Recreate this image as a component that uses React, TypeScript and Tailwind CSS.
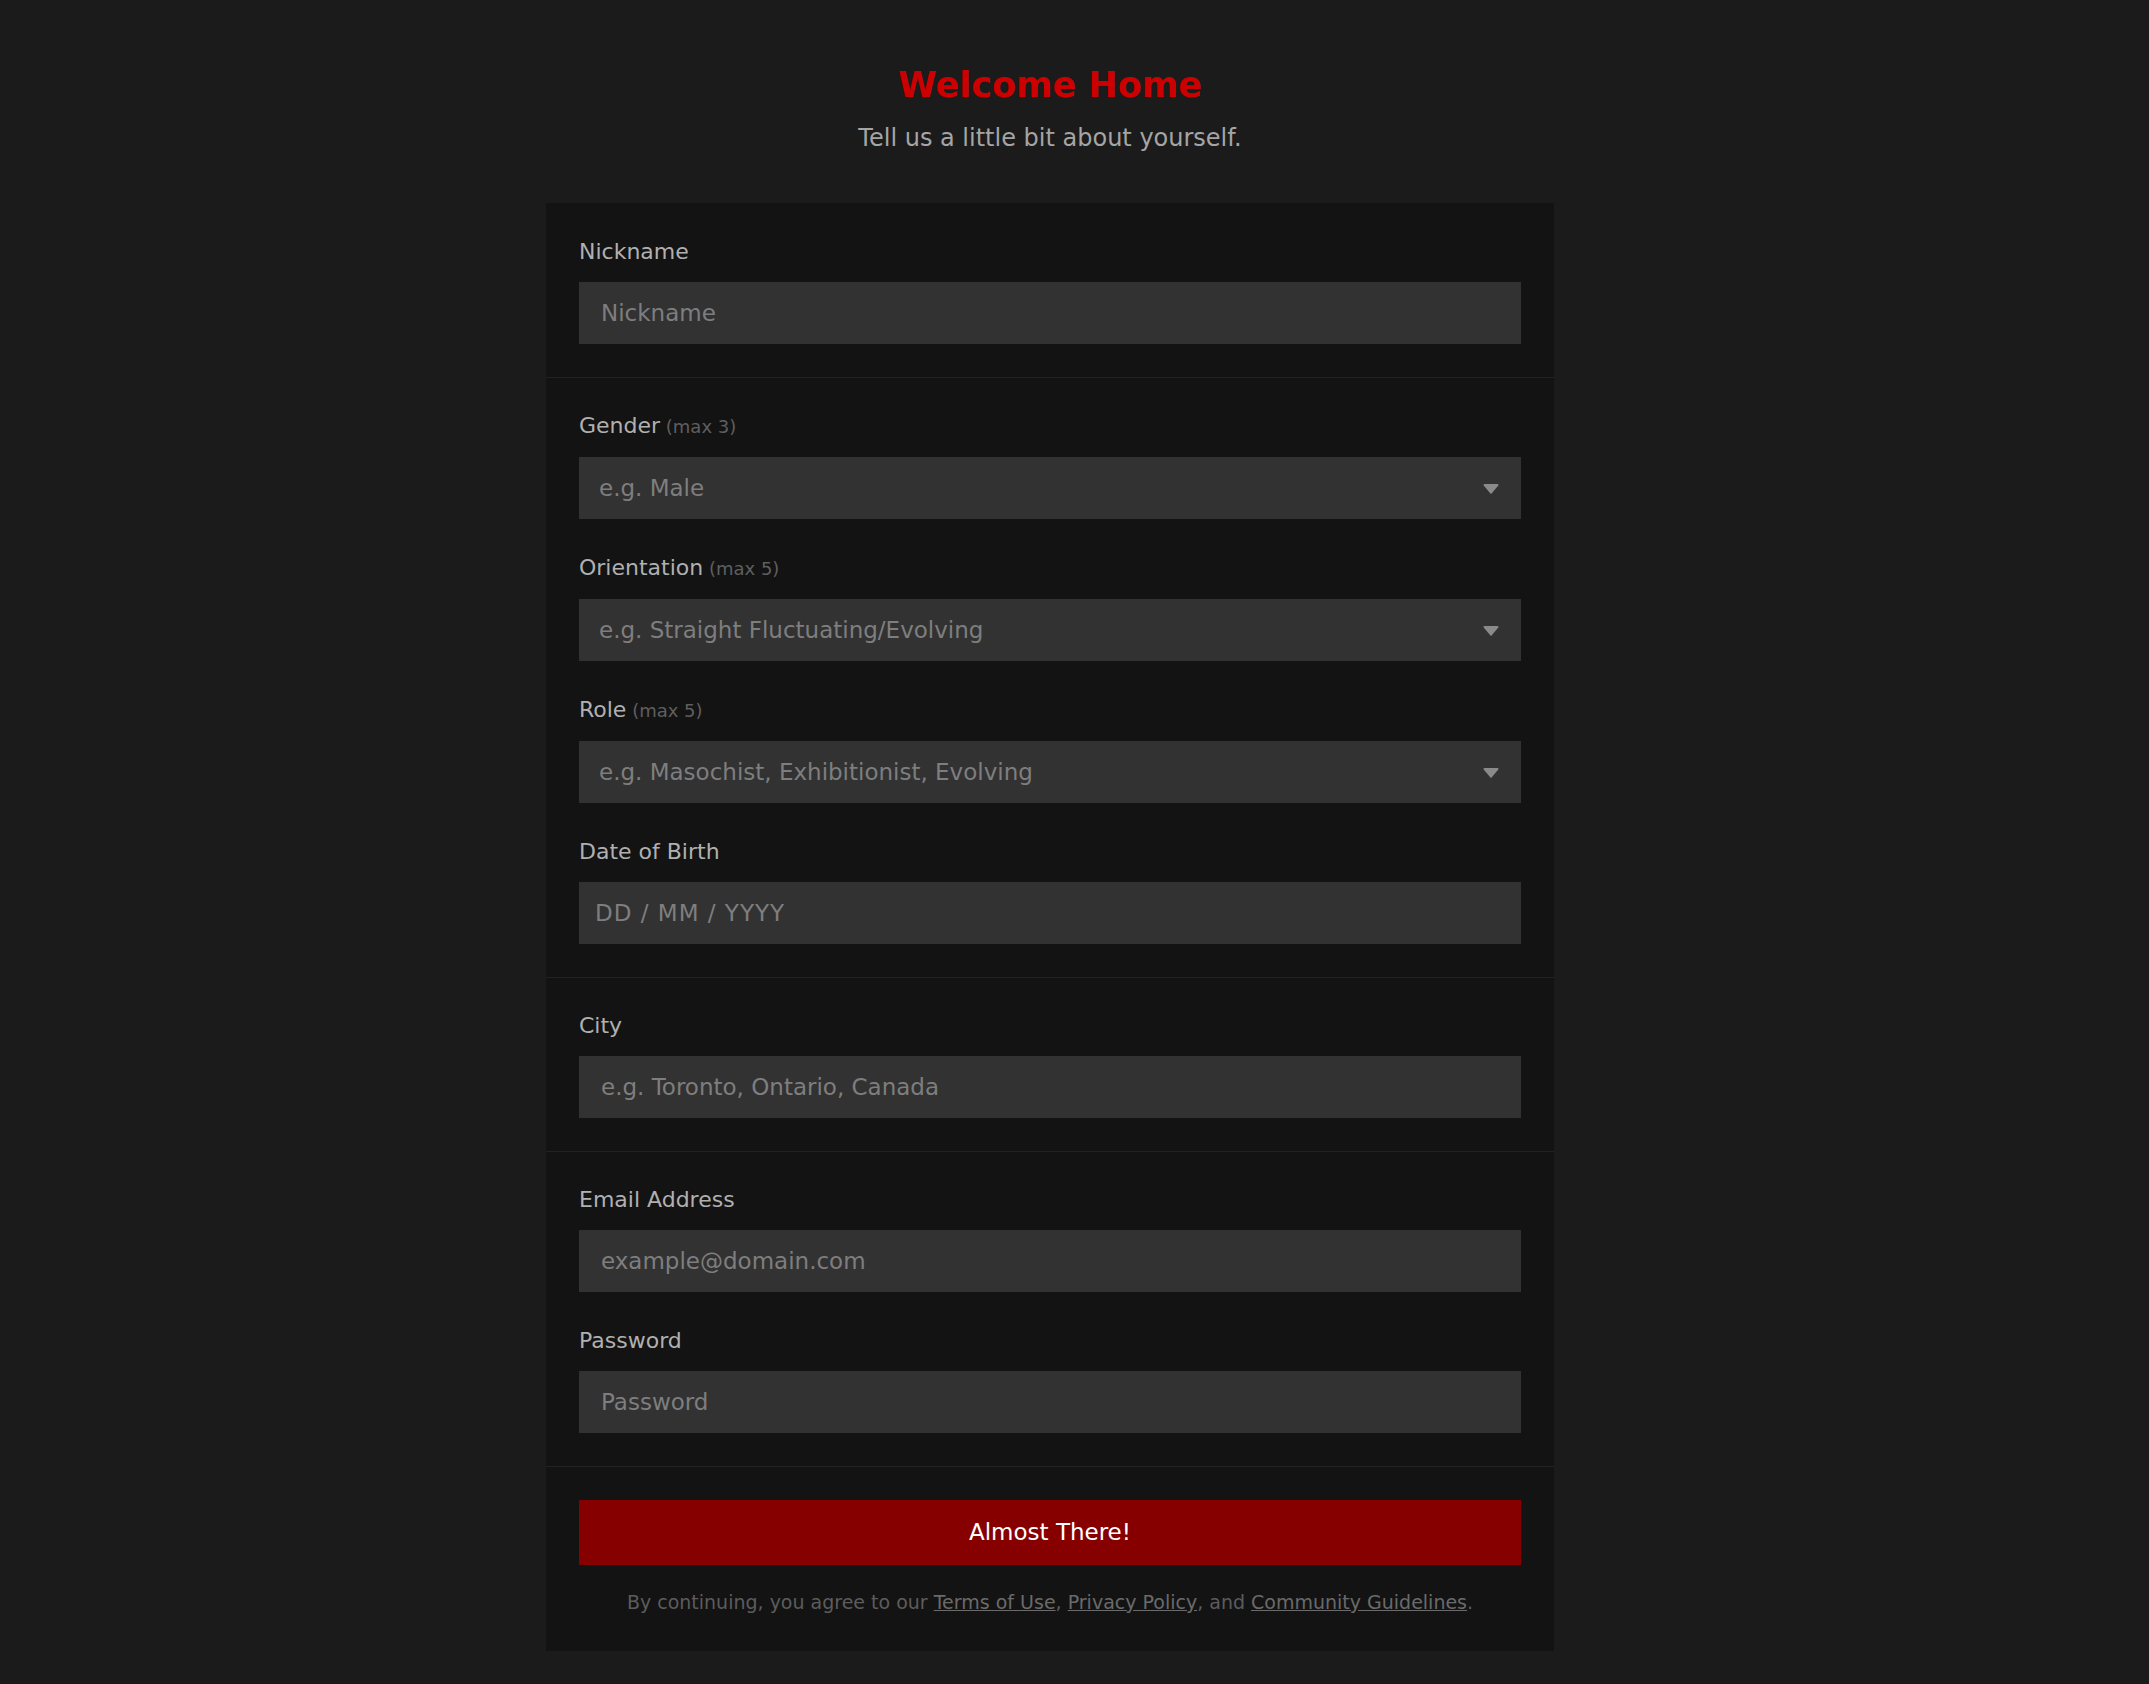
import React from 'react';

const font = { fontFamily: '"DejaVu Sans", Verdana, sans-serif' };

const labelClasses = "block text-[22px] leading-[33px] text-[#b0b0b0] mb-[14px]";
const inputClasses = "w-full h-[62px] bg-[#323232] px-[22px] text-[23px] text-[#d0d0d0] placeholder:text-[#7e7e7e] outline-none";

function Field({ label, hint, children }: { label: string; hint?: string; children: React.ReactNode }) {
  return (
    <div>
      <label className={labelClasses}>
        {label}
        {hint && <span className="text-[18px] text-[#5f5f5f]"> {hint}</span>}
      </label>
      {children}
    </div>
  );
}

function SelectBox({ placeholder }: { placeholder: string }) {
  return (
    <div className="w-full h-[62px] bg-[#323232] pl-[20px] pr-[22px] flex items-center justify-between cursor-pointer">
      <span className="text-[23px] text-[#7e7e7e]">{placeholder}</span>
      <svg width="16" height="11" viewBox="0 0 16 11">
        <path d="M1.5 1h13a1 1 0 0 1 .8 1.6l-6.5 7.6a1 1 0 0 1-1.6 0L0.7 2.6A1 1 0 0 1 1.5 1z" fill="#8a8a8a" />
      </svg>
    </div>
  );
}

export default function App() {
  return (
    <div style={font} className="min-h-screen bg-[#1b1b1b] pt-[64px] pb-[32px] pr-[49px]">
      <div className="text-center">
        <h1 className="text-[35px] leading-[43px] font-bold text-[#cc0000]">Welcome Home</h1>
        <p className="mt-[14px] text-[24px] leading-[34px] text-[#a5a5a5]">Tell us a little bit about yourself.</p>
      </div>

      <form className="w-[1008px] mx-auto mt-[48px] bg-[#131313]">
        <div className="px-[33px] pt-[32px] pb-[33px] border-b border-[#222222]">
          <Field label="Nickname">
            <input type="text" placeholder="Nickname" className={inputClasses} />
          </Field>
        </div>

        <div className="px-[33px] pt-[31px] pb-[33px] border-b border-[#222222] flex flex-col gap-[32px]">
          <Field label="Gender" hint="(max 3)">
            <SelectBox placeholder="e.g. Male" />
          </Field>
          <Field label="Orientation" hint="(max 5)">
            <SelectBox placeholder="e.g. Straight Fluctuating/Evolving" />
          </Field>
          <Field label="Role" hint="(max 5)">
            <SelectBox placeholder="e.g. Masochist, Exhibitionist, Evolving" />
          </Field>
          <Field label="Date of Birth">
            <input type="text" placeholder="DD / MM / YYYY" className={`${inputClasses} !px-[16px] tracking-[1px]`} />
          </Field>
        </div>

        <div className="px-[33px] pt-[31px] pb-[33px] border-b border-[#222222]">
          <Field label="City">
            <input type="text" placeholder="e.g. Toronto, Ontario, Canada" className={inputClasses} />
          </Field>
        </div>

        <div className="px-[33px] pt-[31px] pb-[33px] border-b border-[#222222] flex flex-col gap-[32px]">
          <Field label="Email Address">
            <input type="email" placeholder="example@domain.com" className={inputClasses} />
          </Field>
          <Field label="Password">
            <input type="password" placeholder="Password" className={inputClasses} />
          </Field>
        </div>

        <div className="px-[33px] pt-[33px] pb-[35px]">
          <button type="button" className="w-full h-[65px] bg-[#870000] text-white text-[23px]">
            Almost There!
          </button>
          <p className="mt-[24px] text-center text-[19px] leading-[27px] text-[#5c5c5c]">
            By continuing, you agree to our <a className="underline text-[#6a6a6a]">Terms of Use</a>,{' '}
            <a className="underline text-[#6a6a6a]">Privacy Policy</a>, and{' '}
            <a className="underline text-[#6a6a6a]">Community Guidelines</a>.
          </p>
        </div>
      </form>
    </div>
  );
}
